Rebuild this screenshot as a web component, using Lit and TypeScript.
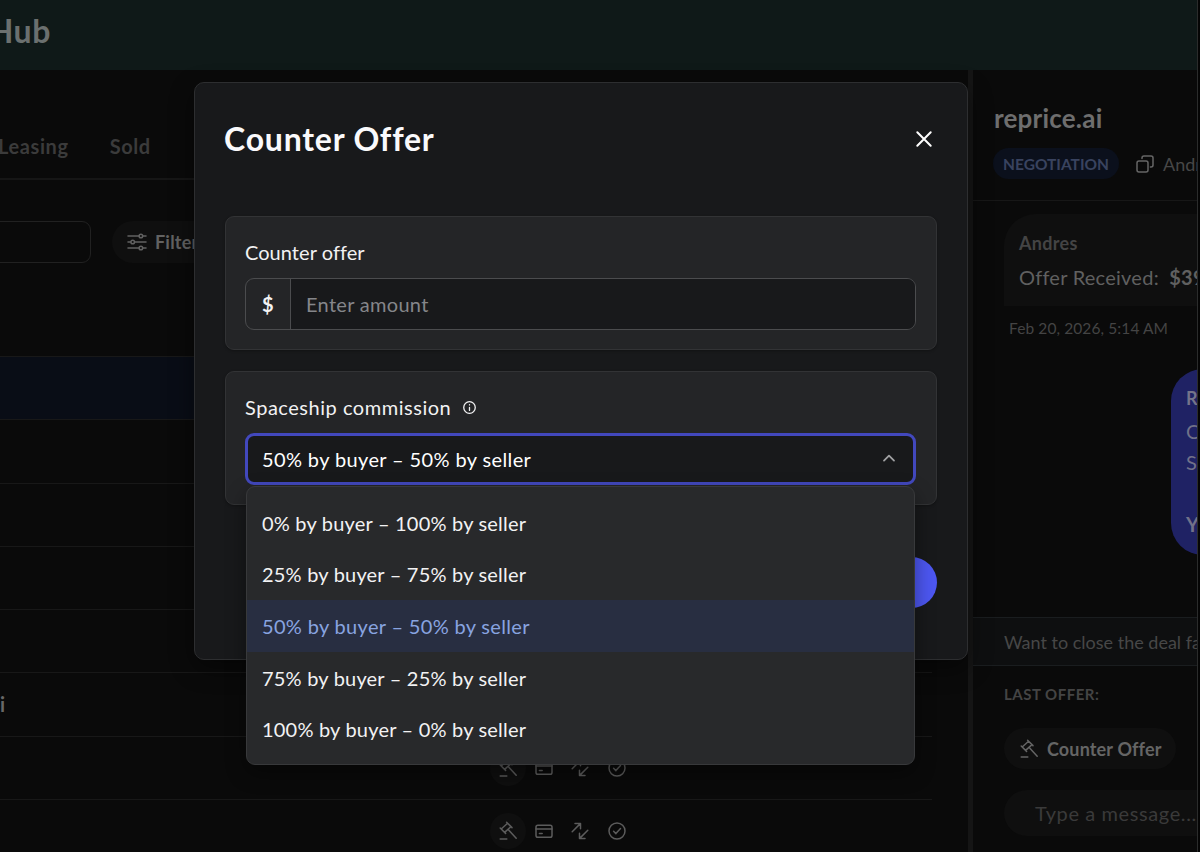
import { LitElement, html, css, svg } from 'lit';
import { customElement, property, state } from 'lit/decorators.js';
import { classMap } from 'lit/directives/class-map.js';

const icons = {
  gavel: svg`<path d="M7.6.2 13 5.6M1.2 6l5.4 5.4M8.6 1.2 2.2 7M12 4.6l-6.4 5.8M9.2 7.6l8 8.6M1.2 17h6.6"/>`,
  card: svg`<rect x="1" y="3.2" width="16" height="12" rx="1.8"/><path d="M1 7h16M4.4 11.4h2.8"/>`,
  arrows: svg`<path d="M1.2 9.8 9.3 1.6M4 1.4h5.5v5.4M16.8 8.2l-8.1 8.2M14 16.6H8.5v-5.4"/>`,
  check: svg`<circle cx="9" cy="9" r="8"/><path d="m5.6 9.3 2.3 2.3 4.6-5"/>`,
  copy: svg`<rect x="1" y="6" width="11" height="11" rx="2"/><path d="M6 3.6V3a2 2 0 0 1 2-2h7a2 2 0 0 1 2 2v7a2 2 0 0 1-2 2h-.6"/>`,
  filters: svg`<path d="M0 3h10.8M15 3h3M0 9h2.6M6.8 9H18M0 15h10.8M15 15h3"/><circle cx="12.9" cy="3" r="1.8"/><circle cx="4.7" cy="9" r="1.8"/><circle cx="12.9" cy="15" r="1.8"/>`,
  close: svg`<path d="m2.3 2.3 13.4 13.4M15.7 2.3 2.3 15.7"/>`,
  chevron: svg`<path d="m4 11.6 5-5 5 5"/>`,
  info: svg`<circle cx="9" cy="9" r="8"/><path d="M9 9v4M9 5.2v.2"/>`,
};

@customElement('ui-icon')
class UiIcon extends LitElement {
  @property() name: keyof typeof icons = 'check';

  static styles = css`
    :host {
      display: block;
      flex: none;
      width: 18px;
      height: 18px;
    }

    svg {
      display: block;
      width: 100%;
      height: 100%;
      overflow: visible;
      fill: none;
      stroke: currentColor;
      stroke-width: var(--stroke, 1.5);
      stroke-linecap: round;
      stroke-linejoin: round;
    }
  `;

  render() {
    return html`<svg viewBox="0 0 18 18">${icons[this.name]}</svg>`;
  }
}

@customElement('deal-list')
class DealList extends LitElement {
  private rows = ['', '', '', '', '', 'reprice.ai', '', ''];

  static styles = css`
    :host {
      display: block;
      overflow: hidden;
      background: #0a0a0a;
      color: #4c4c4c;
    }

    .tabs {
      display: flex;
      align-items: flex-end;
      box-sizing: border-box;
      height: 110px;
      padding-bottom: 19px;
      border-bottom: 2px solid #161616;
      font-size: 20px;
      line-height: 26px;
      font-weight: 700;
      color: #3b3b3b;
      letter-spacing: 0.6px;
      gap: 41px;
    }

    .tab:first-child {
      margin-left: -2px;
    }

    .tools {
      display: flex;
      gap: 21px;
      padding-top: 41px;
      height: 176px;
      box-sizing: border-box;
    }

    .search {
      box-sizing: border-box;
      width: 111px;
      height: 42px;
      margin-left: -20px;
      border: 1px solid #212121;
      border-radius: 9px;
    }

    .filter {
      display: flex;
      align-items: center;
      gap: 9px;
      height: 42px;
      padding: 0 20px 0 16px;
      border-radius: 21px;
      background: #0f0f0f;
      color: #626262;
      font-size: 18px;
      font-weight: 700;
      letter-spacing: 0.2px;
    }

    .row {
      display: grid;
      grid-template-columns: 490px 1fr;
      align-items: center;
      box-sizing: border-box;
      width: 932px;
      height: 63.25px;
      border-top: 1px solid #181818;
      font-size: 20px;
      font-weight: 700;
      color: #686868;
    }

    .row.selected {
      background: #090d16;
    }

    .name {
      width: 5px;
      direction: rtl;
      overflow: hidden;
      white-space: nowrap;
    }

    .actions {
      display: flex;
      align-items: center;
      gap: 18.2px;
      color: #5c5c5c;
    }

    .bid {
      display: grid;
      place-items: center;
      width: 36px;
      height: 36px;
      margin-right: -9px;
      border-radius: 50%;
      background: #0f0f0f;
    }
  `;

  render() {
    return html`
      <div class="tabs">
        <div class="tab">Leasing</div>
        <div class="tab">Sold</div>
      </div>
      <div class="tools">
        <div class="search"></div>
        <div class="filter"><ui-icon name="filters"></ui-icon>Filters</div>
      </div>
      ${this.rows.map((name, i) => html`
        <div class=${classMap({ row: true, selected: i === 0 })}>
          <div class="name">${name}</div>
          <div class="actions">
            <div class="bid"><ui-icon name="gavel"></ui-icon></div>
            <ui-icon name="card"></ui-icon>
            <ui-icon name="arrows"></ui-icon>
            <ui-icon name="check"></ui-icon>
          </div>
        </div>
      `)}
    `;
  }
}

@customElement('deal-chat')
class DealChat extends LitElement {
  static styles = css`
    :host {
      display: flex;
      flex-direction: column;
      overflow: hidden;
      white-space: nowrap;
      background: #0a0a0a;
      border-left: 5px solid #151515;
      color: #606060;
    }

    .head {
      flex: none;
      box-sizing: border-box;
      height: 131px;
      padding: 31px 0 0 21px;
      border-bottom: 1px solid #171717;
    }

    .title {
      font-size: 26px;
      line-height: 34px;
      font-weight: 700;
      color: #6e6e6e;
      letter-spacing: 0.2px;
    }

    .meta {
      display: flex;
      align-items: center;
      margin-top: 13px;
      font-size: 18px;
      color: #474747;
    }

    .badge {
      flex: none;
      box-sizing: border-box;
      width: 126px;
      height: 31px;
      margin: 0 17px 0 -1px;
      border-radius: 16px;
      background: #0b101c;
      color: #39435f;
      font-size: 15.5px;
      line-height: 32px;
      font-weight: 700;
      text-align: center;
    }

    .meta ui-icon {
      margin-right: 9px;
      color: #666;
    }

    .thread {
      flex: none;
      box-sizing: border-box;
      height: 416px;
      padding: 13px 0 0 31px;
    }

    .received {
      box-sizing: border-box;
      width: 300px;
      height: 92px;
      padding: 16px 0 0 15px;
      border-radius: 32px 32px 32px 0;
      background: #0f0f0f;
    }

    .from {
      font-size: 18px;
      line-height: 26px;
      font-weight: 700;
      color: #444;
      letter-spacing: 0.3px;
    }

    .line {
      font-size: 20px;
      line-height: 30px;
      margin-top: 6px;
      letter-spacing: 0.25px;
    }

    .line b {
      margin-left: 5px;
    }

    .date {
      margin: 12px 0 0 5px;
      font-size: 15.5px;
      line-height: 20px;
      color: #444;
      letter-spacing: 0.1px;
    }

    .sent {
      box-sizing: border-box;
      width: 300px;
      height: 186px;
      margin: 31px 0 0 167px;
      padding: 16px 0 0 15px;
      border-radius: 32px;
      background: #1f2264;
      color: #717189;
      font-size: 20px;
      line-height: 31px;
    }

    .sent .from {
      color: #74748a;
      line-height: 26px;
      margin-bottom: 5px;
    }

    .sent .total {
      margin-top: 31px;
      font-weight: 700;
    }

    .notice {
      flex: none;
      box-sizing: border-box;
      height: 49px;
      padding-left: 31px;
      border: solid #1a1d1f;
      border-width: 1px 0;
      background: #0e0f10;
      color: #474747;
      font-size: 18px;
      line-height: 48px;
      letter-spacing: 0;
    }

    .last {
      padding: 17px 0 0 31px;
      font-size: 15px;
      line-height: 22px;
      font-weight: 700;
      color: #444;
      letter-spacing: 0.5px;
    }

    .counter {
      display: flex;
      flex: none;
      align-items: center;
      gap: 9px;
      box-sizing: border-box;
      width: 172px;
      height: 41px;
      margin: 23px 0 0 31px;
      padding-left: 16px;
      border-radius: 21px;
      background: #0f0f0f;
      color: #656565;
      font-size: 18px;
      font-weight: 700;
      letter-spacing: 0.15px;
    }

    .compose {
      height: 46px;
      margin: 21px 0 0 31px;
      padding-left: 31px;
      border-radius: 23px 0 0 23px;
      background: #0f0f0f;
      color: #3a3a3a;
      font-size: 20px;
      line-height: 47px;
      letter-spacing: 0.6px;
    }
  `;

  render() {
    return html`
      <div class="head">
        <div class="title">reprice.ai</div>
        <div class="meta">
          <span class="badge">NEGOTIATION</span>
          <ui-icon name="copy"></ui-icon>
          <span>Andres</span>
        </div>
      </div>
      <div class="thread">
        <div class="received">
          <div class="from">Andres</div>
          <div class="line">Offer Received: <b>$399</b></div>
        </div>
        <div class="date">Feb 20, 2026, 5:14 AM</div>
        <div class="sent">
          <div class="from">R</div>
          <div>C</div>
          <div>S</div>
          <div class="total">Y</div>
        </div>
      </div>
      <div class="notice">Want to close the deal faster?</div>
      <div class="last">LAST OFFER:</div>
      <div class="counter"><ui-icon name="gavel"></ui-icon>Counter Offer</div>
      <div class="compose">Type a message...</div>
    `;
  }
}

@customElement('counter-offer-dialog')
class CounterOfferDialog extends LitElement {
  @state() private selected = 2;

  private options = [
    '0% by buyer – 100% by seller',
    '25% by buyer – 75% by seller',
    '50% by buyer – 50% by seller',
    '75% by buyer – 25% by seller',
    '100% by buyer – 0% by seller',
  ];

  static styles = css`
    :host {
      display: block;
      box-sizing: border-box;
      width: 774px;
      height: 578px;
      padding: 33px 30px 0 29px;
      border: 1px solid #2d2e30;
      border-radius: 10px;
      background: #18191b;
      box-shadow: 0 8px 24px rgba(0, 0, 0, 0.45);
      color: #f2f2f3;
      font-size: 20px;
      letter-spacing: 0.3px;
    }

    header {
      display: flex;
      justify-content: space-between;
      align-items: center;
      height: 44px;
      padding-right: 4px;
    }

    h2 {
      margin: 0;
      font-size: 32px;
      font-weight: 700;
      letter-spacing: 0.8px;
      color: #fafafc;
    }

    header ui-icon {
      --stroke: 2;
      margin-top: 2px;
      color: #fff;
    }

    .card {
      box-sizing: border-box;
      height: 134px;
      margin: 0 0 21px 1px;
      padding: 21px 20px 0 19px;
      border: 1px solid #323335;
      border-radius: 9px;
      background: #242527;
      box-shadow: 0 1px 3px rgba(0, 0, 0, 0.3);
    }

    .card.amount {
      margin-top: 56px;
    }

    .label {
      display: flex;
      align-items: center;
      gap: 12px;
      height: 28px;
      margin-bottom: 12px;
      letter-spacing: 0.53px;
    }

    .amount .label {
      letter-spacing: 0.05px;
    }

    .label ui-icon {
      width: 13px;
      height: 13px;
      --stroke: 1.8;
    }

    .field {
      display: flex;
      box-sizing: border-box;
      height: 52px;
      border: 1px solid #4b4c4e;
      border-radius: 9px;
      line-height: 50px;
      overflow: hidden;
    }

    .currency {
      width: 44px;
      border-right: 1px solid #4b4c4e;
      text-align: center;
      font-weight: 700;
    }

    .input {
      flex: 1;
      padding-left: 15px;
      background: #18191b;
      color: #85868a;
    }

    .select {
      position: relative;
    }

    .value {
      display: flex;
      justify-content: space-between;
      align-items: center;
      box-sizing: border-box;
      height: 52px;
      padding: 0 15px 0 14px;
      border: 3px solid #4248bd;
      border-radius: 9px;
      background: #18191b;
      color: #fff;
      letter-spacing: 0.38px;
    }

    .value ui-icon {
      color: #a0a1a3;
      --stroke: 1.8;
      margin-bottom: 2px;
    }

    /* the menu hangs below the field and covers the footer */
    .menu {
      position: absolute;
      z-index: 1;
      top: 53px;
      left: 1px;
      right: 1px;
      box-sizing: border-box;
      height: 279px;
      padding-top: 9.5px;
      border: 1px solid #38393b;
      border-radius: 9px;
      background: #28292b;
      box-shadow: 0 8px 20px rgba(0, 0, 0, 0.4);
    }

    .option {
      height: 51.7px;
      padding-left: 15px;
      line-height: 52px;
      letter-spacing: 0.2px;
    }

    .option.selected {
      background: #282e41;
      color: #88a4e0;
      letter-spacing: 0.33px;
    }

    footer {
      display: flex;
      justify-content: flex-end;
      margin-top: 52px;
    }

    .send {
      width: 160px;
      height: 51px;
      border: 0;
      border-radius: 26px;
      background: #4d57f2;
    }
  `;

  render() {
    return html`
      <header>
        <h2>Counter Offer</h2>
        <ui-icon name="close"></ui-icon>
      </header>
      <div class="card amount">
        <div class="label">Counter offer</div>
        <div class="field">
          <div class="currency">$</div>
          <div class="input">Enter amount</div>
        </div>
      </div>
      <div class="card">
        <div class="label">Spaceship commission <ui-icon name="info"></ui-icon></div>
        <div class="select">
          <div class="value">${this.options[this.selected]}<ui-icon name="chevron"></ui-icon></div>
          <div class="menu">
            ${this.options.map((option, i) => html`
              <div class=${classMap({ option: true, selected: i === this.selected })}
                @click=${() => (this.selected = i)}>${option}</div>
            `)}
          </div>
        </div>
      </div>
      <footer><button class="send"></button></footer>
    `;
  }
}

@customElement('app-root')
class AppRoot extends LitElement {
  static styles = css`
    :host {
      display: block;
      position: relative;
      box-sizing: border-box;
      width: 1200px;
      height: 852px;
      overflow: hidden;
      background: #0a0a0a;
      font-family: Lato, 'Open Sans', sans-serif;
    }

    .topbar {
      height: 70px;
      background: #0f1918;
      color: #6b706f;
      font-size: 32px;
      line-height: 61px;
      font-weight: 700;
      letter-spacing: 0.6px;
    }

    .brand {
      display: flex;
      justify-content: flex-end;
      width: 51px;
      white-space: nowrap;
    }

    .body {
      display: grid;
      grid-template-columns: 968px 1fr;
      height: 782px;
    }

    .overlay {
      position: absolute;
      inset: 82px auto auto 194px;
    }

    .edge {
      position: absolute;
      inset: 0 0 0 auto;
      width: 2px;
      border-left: 1px solid #2b2c2c;
      background: #050505;
    }
  `;

  render() {
    return html`
      <div class="topbar"><div class="brand">Hub</div></div>
      <div class="body">
        <deal-list></deal-list>
        <deal-chat></deal-chat>
      </div>
      <div class="edge"></div>
      <counter-offer-dialog class="overlay"></counter-offer-dialog>
    `;
  }
}
